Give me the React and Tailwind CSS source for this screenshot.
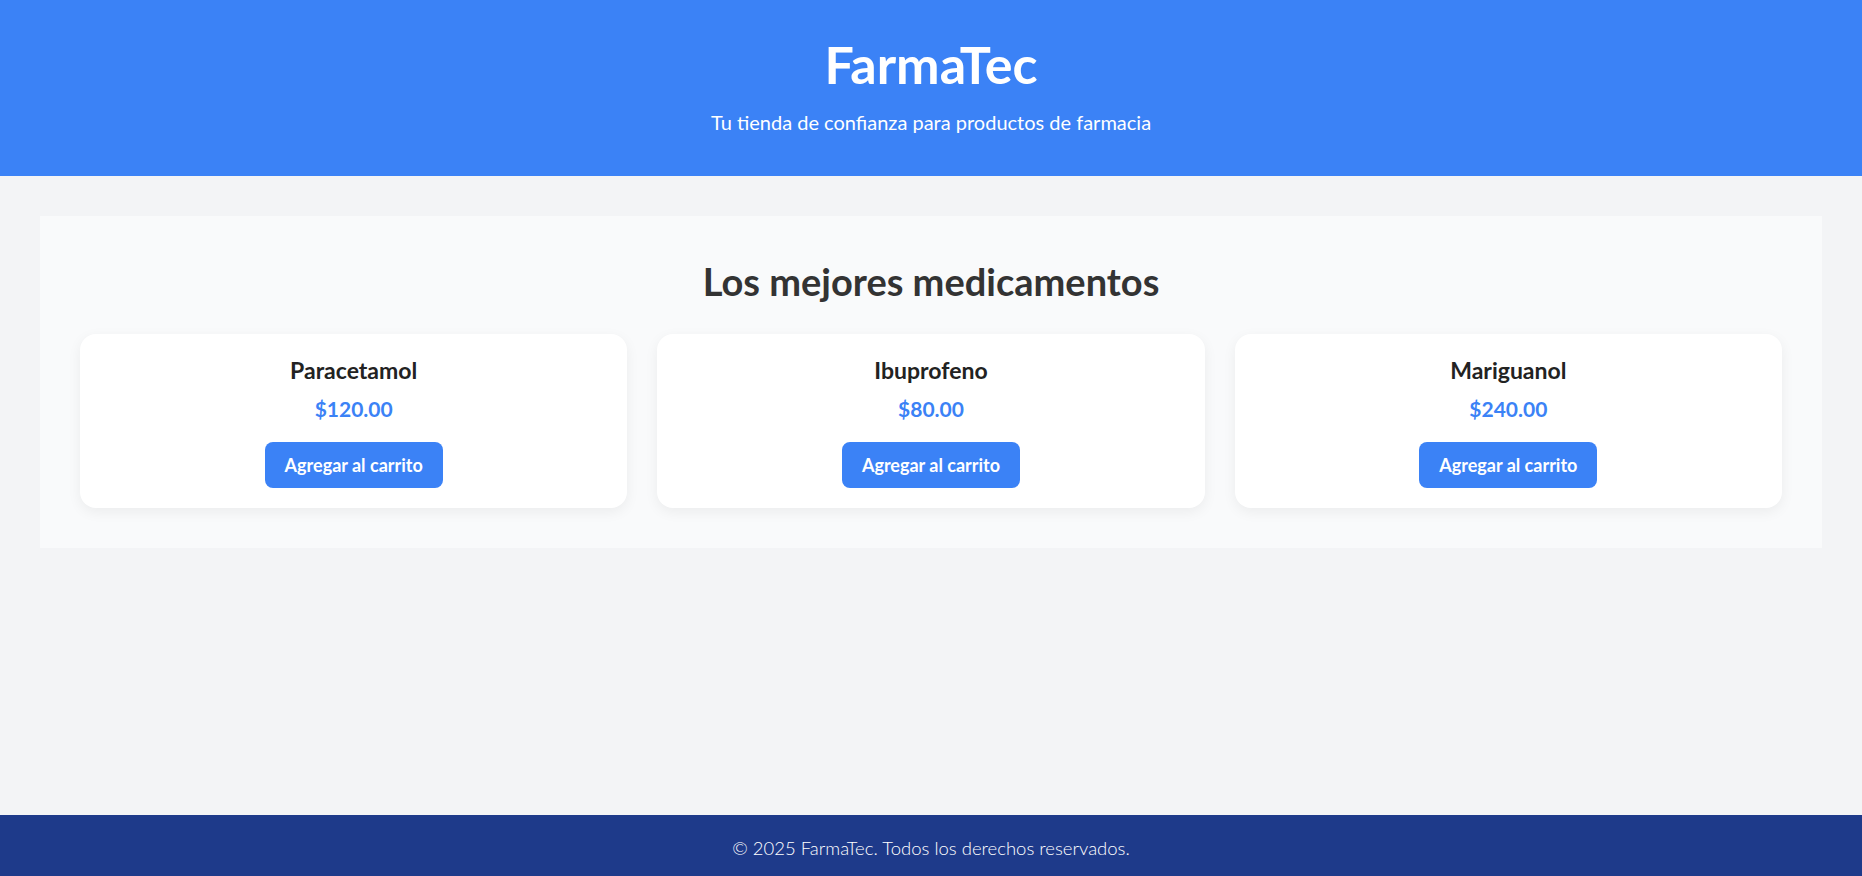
const products = [
  { id: 1, name: "Paracetamol", price: 120 },
  { id: 2, name: "Ibuprofeno", price: 80 },
  { id: 3, name: "Mariguanol", price: 240 },
];

const App = () => {
  return (
    <div
      className="min-h-screen flex flex-col bg-[#f3f4f6]"
      style={{ fontFamily: "Lato, 'Open Sans', sans-serif" }}
    >
      {/* Header */}
      <header className="bg-[#3b82f6] text-white text-center py-10">
        <h1 className="text-[52px] leading-[48px] font-bold mb-5">FarmaTec</h1>
        <p className="text-xl leading-7">
          Tu tienda de confianza para productos de farmacia
        </p>
      </header>

      {/* Productos */}
      <main className="flex-1 p-10">
        <section className="bg-[#f9fafb] p-10">
          <h2 className="text-[38px] leading-[50px] font-bold text-[#333] text-center mb-7">
            Los mejores medicamentos
          </h2>
          <div className="grid grid-cols-3 gap-[30px]">
            {products.map((product) => (
              <div
                key={product.id}
                className="bg-white rounded-2xl p-5 text-center shadow-[0_4px_14px_rgba(0,0,0,0.06)]"
              >
                <h3 className="text-[23px] leading-[32px] font-bold text-[#222]">
                  {product.name}
                </h3>
                <p className="text-[21px] leading-7 font-bold text-[#3b82f6] mt-[9px]">
                  ${product.price.toFixed(2)}
                </p>
                <button className="mt-[19px] bg-[#3b82f6] text-white font-bold text-[18px] leading-[22px] px-5 py-3 rounded-lg hover:bg-[#2563eb]">
                  Agregar al carrito
                </button>
              </div>
            ))}
          </div>
        </section>
      </main>

      {/* Footer */}
      <footer className="bg-[#1e3a8a] text-white text-center text-[18.5px] font-light leading-7 pt-[19px] pb-[14px]">
        © 2025 FarmaTec. Todos los derechos reservados.
      </footer>
    </div>
  );
};

export default App;
